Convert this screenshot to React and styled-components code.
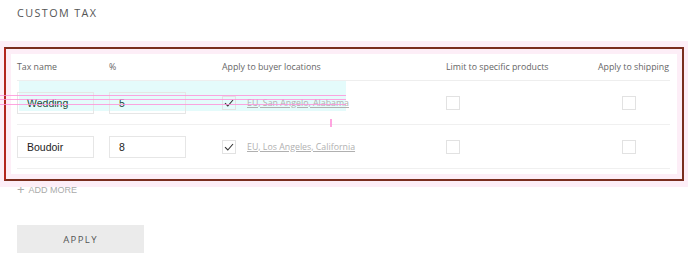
import React from 'react';
import styled, {createGlobalStyle} from 'styled-components';

const Global = createGlobalStyle`
    body {
        margin: 0;
        background: #fff;
        font-family: "Open Sans", "Liberation Sans", sans-serif;
    }
`

const Page = styled.div`
    width: 688px;
    height: 258px;
    position: relative;
    overflow: hidden;
`

const Title = styled.h2`
    margin: 0;
    padding: 5px 0 0 17px;
    height: 47px;
    box-sizing: border-box;
    font-size: 10.8px;
    font-weight: 400;
    letter-spacing: 1.4px;
    color: #555;
`

const Frame = styled.div`
    position: relative;
    margin-left: 4px;
    width: 680px;
    height: 134px;
    box-sizing: border-box;
    border: 2px solid #7a2e1e;
    border-left-color: #b3261e;
    box-shadow: 0 0 0 6px #fdeef7, inset 0 0 0 5px #fdeef7;
    padding: 0 11px 0 11px;
`

const Grid = styled.div`
    display: grid;
    grid-template-columns: 92px 113px 224px 152px 1fr;
    width: 653px;
`

const Head = styled.div`
    height: 32px;
    padding-top: 12px;
    box-sizing: border-box;
    font-size: 8.8px;
    color: #666;
    border-bottom: 1px solid #eee;
    white-space: nowrap;
`

const Cell = styled.div`
    height: 44px;
    box-sizing: border-box;
    display: flex;
    align-items: center;
    border-bottom: 1px solid #f0f0f0;
    padding-left: ${({pad}) => pad || 0}px;
    position: relative;
    z-index: 1;
`

const Field = styled.div`
    width: 77px;
    height: 22px;
    box-sizing: border-box;
    border: 1px solid #e6e6e6;
    padding-left: 9px;
    display: flex;
    align-items: center;
    font-family: "Liberation Sans", Arial, sans-serif;
    font-size: 10.5px;
    color: ${({tint}) => tint || '#222'};
    background: transparent;
`

const Box = styled.span`
    width: 14px;
    height: 14px;
    box-sizing: border-box;
    border: 1px solid #e2e2e2;
    display: inline-flex;
    align-items: center;
    justify-content: center;
    flex-shrink: 0;
`

const Location = styled.a`
    margin-left: 11px;
    font-size: 8.8px;
    color: #b0b0b0;
    text-decoration: underline;
    white-space: nowrap;
`

const Band = styled.div`
    position: absolute;
    left: 13px;
    top: 32px;
    width: 327px;
    height: 30px;
    background: #e4fbfb;
    z-index: 0;
`

const Line = styled.div`
    position: absolute;
    left: ${({x}) => x}px;
    top: ${({y}) => y}px;
    width: ${({w}) => w}px;
    height: ${({h}) => h || 1}px;
    background: #ff8fd8;
    z-index: 2;
    opacity: 0.8;
`

const AddMore = styled.div`
    display: flex;
    align-items: center;
    gap: 4px;
    margin: 1px 0 0 17px;
    font-family: "Liberation Sans", Arial, sans-serif;
    font-size: 9px;
    color: #aaa;
    span:first-child {
        font-size: 13px;
        font-weight: 300;
    }
`

const ApplyButton = styled.button`
    display: block;
    margin: 28px 0 0 17px;
    width: 127px;
    height: 28px;
    border: none;
    background: #ebebeb;
    font-family: "Open Sans", sans-serif;
    font-size: 9.5px;
    letter-spacing: 1.4px;
    color: #555;
`

const Check = () => (
    <svg width="10" height="8" viewBox="0 0 10 8">
        <path d="M1 4.2 L3.8 7 L9 1" fill="none" stroke="#333" strokeWidth="1.1"/>
    </svg>
)

const rows = [
    {name: 'Wedding', rate: '5', place: 'EU, San Angelo, Alabama', tint: '#1f4a3a'},
    {name: 'Boudoir', rate: '8', place: 'EU, Los Angeles, California'},
]

const App = () => {
    return (
        <Page>
            <Global/>
            <Title>CUSTOM TAX</Title>
            <Frame>
                <Band/>
                <Line x={-6} y={46} w={346}/>
                <Line x={-6} y={50} w={346}/>
                <Line x={-6} y={55} w={346}/>
                <Line x={324} y={70} w={2} h={8}/>
                <Grid>
                    <Head>Tax name</Head>
                    <Head>%</Head>
                    <Head>Apply to buyer locations</Head>
                    <Head>Limit to specific products</Head>
                    <Head>Apply to shipping</Head>
                    {rows.map(r => (
                        <React.Fragment key={r.name}>
                            <Cell><Field tint={r.tint}>{r.name}</Field></Cell>
                            <Cell><Field tint={r.tint}>{r.rate}</Field></Cell>
                            <Cell>
                                <Box><Check/></Box>
                                <Location>{r.place}</Location>
                            </Cell>
                            <Cell><Box/></Cell>
                            <Cell pad={24}><Box/></Cell>
                        </React.Fragment>
                    ))}
                </Grid>
            </Frame>
            <AddMore><span>+</span><span>ADD MORE</span></AddMore>
            <ApplyButton>APPLY</ApplyButton>
        </Page>
    )
}

export default App
